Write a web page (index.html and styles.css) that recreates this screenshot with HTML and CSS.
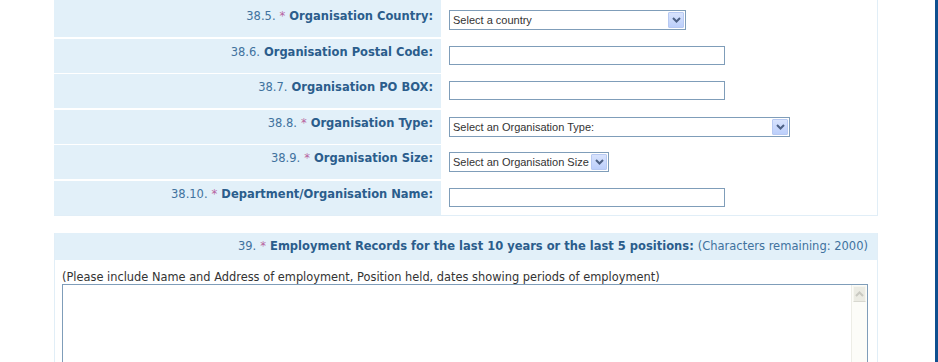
FILE: index.html
```html
<!DOCTYPE html>
<html lang="en">
<head>
    <meta charset="UTF-8">
    <title>Application Form - Organisation Details</title>
    <link rel="stylesheet" href="styles.css">
</head>
<body>
    <div class="frame">
        <div class="content">
            <div class="panel">
                <!-- tail of the row above (scrolled out of view) -->
                <div class="row stub">
                    <div class="label"></div>
                    <div></div>
                </div>
                <div class="row">
                    <label class="label"><span class="num">38.5.</span> <span class="req">*</span> Organisation Country:</label>
                    <div class="field">
                        <div class="select country">
                            <select><option>Select a country</option></select>
                            <span class="arrow"><svg width="9" height="6" viewBox="0 0 9 6"><path d="M1 1l3.5 3.5L8 1" fill="none" stroke="#4d6185" stroke-width="2"/></svg></span>
                        </div>
                    </div>
                </div>
                <div class="row">
                    <label class="label"><span class="num">38.6.</span> Organisation Postal Code:</label>
                    <div class="field"><input type="text" class="text"></div>
                </div>
                <div class="row">
                    <label class="label"><span class="num">38.7.</span> Organisation PO BOX:</label>
                    <div class="field"><input type="text" class="text"></div>
                </div>
                <div class="row">
                    <label class="label"><span class="num">38.8.</span> <span class="req">*</span> Organisation Type:</label>
                    <div class="field">
                        <div class="select type">
                            <select><option>Select an Organisation Type:</option></select>
                            <span class="arrow"><svg width="9" height="6" viewBox="0 0 9 6"><path d="M1 1l3.5 3.5L8 1" fill="none" stroke="#4d6185" stroke-width="2"/></svg></span>
                        </div>
                    </div>
                </div>
                <div class="row">
                    <label class="label"><span class="num">38.9.</span> <span class="req">*</span> Organisation Size:</label>
                    <div class="field">
                        <div class="select size">
                            <select><option>Select an Organisation Size</option></select>
                            <span class="arrow"><svg width="9" height="6" viewBox="0 0 9 6"><path d="M1 1l3.5 3.5L8 1" fill="none" stroke="#4d6185" stroke-width="2"/></svg></span>
                        </div>
                    </div>
                </div>
                <div class="row">
                    <label class="label"><span class="num">38.10.</span> <span class="req">*</span> Department/Organisation Name:</label>
                    <div class="field"><input type="text" class="text"></div>
                </div>
            </div>

            <div class="panel question">
                <div class="q-head">
                    <span class="num">39.</span> <span class="req">*</span> Employment Records for the last 10 years or the last 5 positions: <span class="remaining">(Characters remaining: 2000)</span>
                </div>
                <div class="q-body">
                    <p class="hint">(Please include Name and Address of employment, Position held, dates showing periods of employment)</p>
                    <div class="textbox">
                        <textarea></textarea>
                        <div class="scroll">
                            <span class="scroll-up"><svg width="9" height="6" viewBox="0 0 9 6"><path d="M1 5l3.5-3.5L8 5" fill="none" stroke="#c9c9c1" stroke-width="2"/></svg></span>
                        </div>
                    </div>
                </div>
            </div>
        </div>
        <div class="edge"></div>
    </div>
</body>
</html>
```

FILE: styles.css
```css
* {
    margin: 0;
    padding: 0;
    box-sizing: border-box;
}

body {
    font-family: "DejaVu Sans", Verdana, sans-serif;
    font-size: 11.5px;
    line-height: 13px;
    background: #fff;
    color: #333;
    overflow: hidden;
}

.frame {
    display: flex;
    height: 362px;
}

.content {
    flex: 1;
    padding-left: 54px;
}

.edge {
    width: 3px;
    background: #0e4f8f;
}

.panel {
    width: 824px;
    border-right: 1px solid #e1eef7;
    border-bottom: 1px solid #e1eef7;
    display: flex;
    flex-direction: column;
    gap: 1.5px;
}

.row {
    display: grid;
    grid-template-columns: 387px 1fr;
    height: 34px;
}

.row.stub {
    height: 1.5px;
}

.label {
    background: #e2f0f9;
    text-align: right;
    padding: 7px 8px 0 0;
    font-weight: bold;
    color: #2b5d8c;
}

.num {
    font-weight: normal;
    color: #41729e;
}

.req {
    font-weight: normal;
    color: #b8649f;
}

.field {
    padding: 7px 0 0 8px;
}

.text {
    display: block;
    width: 276px;
    height: 19px;
    border: 1px solid #7f9db9;
    background: #fff;
}

.select {
    display: flex;
    align-items: center;
    height: 20px;
    border: 1px solid #7f9db9;
    background: #fff;
    padding-right: 1px;
}

.select select {
    flex: 1;
    min-width: 0;
    appearance: none;
    border: 0;
    background: transparent;
    font-family: "Liberation Sans", Arial, sans-serif;
    font-size: 11px;
    color: #333;
    padding-left: 3px;
    outline: none;
}

.arrow {
    width: 16px;
    height: 16px;
    display: flex;
    align-items: center;
    justify-content: center;
    background: linear-gradient(#d8e3fd, #bccffb);
    border: 1px solid #b7c9f2;
    border-radius: 1px;
}

.country {
    width: 237px;
}

.type {
    width: 341px;
}

.size {
    width: 160px;
}

.question {
    margin-top: 17px;
    border-left: 1px solid #e1eef7;
    border-bottom: 0;
    height: 400px;
    display: block;
}

.q-head {
    background: #e2f0f9;
    height: 27px;
    padding: 7px 9px 0 0;
    text-align: right;
    font-weight: bold;
    color: #2b5d8c;
}

.remaining {
    font-weight: normal;
    color: #41729e;
}

.q-body {
    padding: 11px 9px 0 7px;
}

.hint {
    color: #333;
    font-size: 11.4px;
}

.textbox {
    display: flex;
    height: 200px;
    border: 1px solid #7f9db9;
    background: #fff;
}

.textbox textarea {
    flex: 1;
    border: 0;
    resize: none;
    outline: none;
    font-family: "DejaVu Sans", Verdana, sans-serif;
    font-size: 11px;
}

.scroll {
    width: 16px;
    background: #fcfcf8;
    border-left: 1px solid #ededE6;
    padding: 1px 1px 0 1px;
}

.scroll-up {
    display: flex;
    align-items: center;
    justify-content: center;
    height: 16px;
    background: #ebebe3;
    border: 1px solid #f6f6f0;
    border-bottom-color: #d8d8d0;
}
```
